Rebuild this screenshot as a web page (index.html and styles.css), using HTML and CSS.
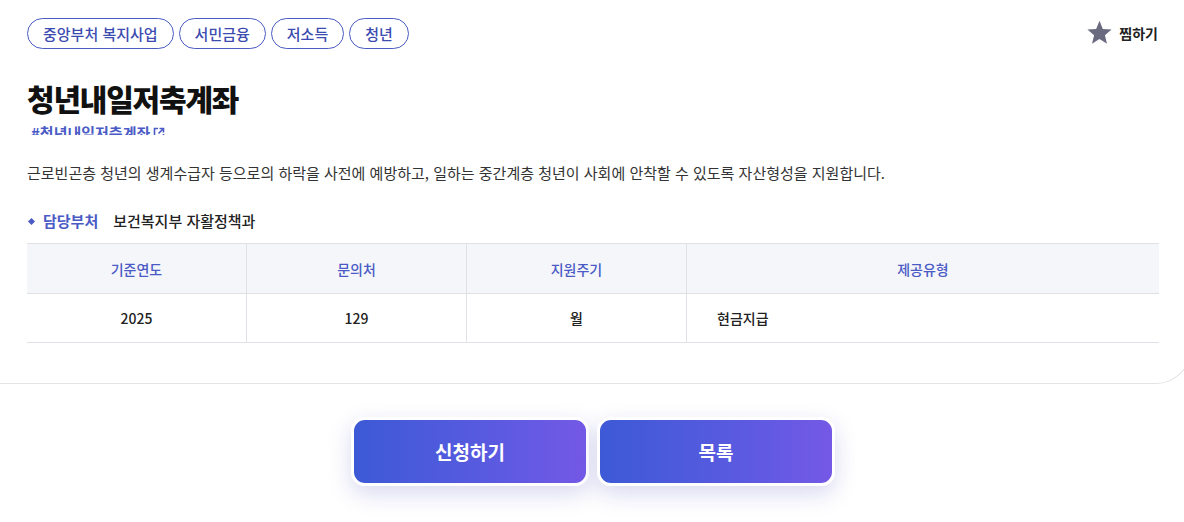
FILE: index.html
```html
<!DOCTYPE html>
<html lang="ko">
<head>
<meta charset="utf-8">
<link rel="stylesheet" href="styles.css">
</head>
<body>
<div class="page">
  <section class="card">
    <div class="top-row">
      <div class="tags">
        <span class="tag">중앙부처 복지사업</span>
        <span class="tag">서민금융</span>
        <span class="tag">저소득</span>
        <span class="tag">청년</span>
      </div>
      <button class="fav">
        <svg class="star" viewBox="0 0 24 24" width="25" height="25"><path d="M12 .8l3.2 7.8 8.4.6-6.4 5.4 2 8.2L12 18.3l-7.2 4.5 2-8.2L.4 9.2l8.4-.6z" fill="#6b6b80"/></svg>
        <span>찜하기</span>
      </button>
    </div>
    <h1 class="title">청년내일저축계좌</h1>
    <div class="hash-wrap"><a class="hash">#청년내일저축계좌 <svg viewBox="0 0 12 12" width="12" height="12"><path d="M5 1.5H1.5v9h9V7" fill="none" stroke="#4a5bc6" stroke-width="1.6"/><path d="M6.5 1.5h4v4M10.5 1.5L5.5 6.5" fill="none" stroke="#4a5bc6" stroke-width="1.6"/></svg></a></div>
    <p class="desc">근로빈곤층 청년의 생계수급자 등으로의 하락을 사전에 예방하고, 일하는 중간계층 청년이 사회에 안착할 수 있도록 자산형성을 지원합니다.</p>
    <div class="dept"><span class="dot"></span><span class="dept-label">담당부처</span><span class="dept-value">보건복지부 자활정책과</span></div>
    <table class="info">
      <thead>
        <tr><th class="c1">기준연도</th><th class="c2">문의처</th><th class="c3">지원주기</th><th class="c4">제공유형</th></tr>
      </thead>
      <tbody>
        <tr><td>2025</td><td>129</td><td>월</td><td class="left">현금지급</td></tr>
      </tbody>
    </table>
  </section>
  <div class="actions">
    <button class="btn">신청하기</button>
    <button class="btn">목록</button>
  </div>
</div>
</body>
</html>
```

FILE: styles.css
```css
html, body {
  margin: 0;
  padding: 0;
  background: #ffffff;
  overflow: hidden;
}
body {
  font-family: "Noto Sans CJK KR", "Noto Sans", "Liberation Sans", sans-serif;
  color: #222;
}
.page {
  width: 1184px;
  padding-bottom: 40px;
}
.card {
  margin-left: -20px;
  margin-right: -7px;
  padding: 18px 31px 40px 47px;
  border-bottom: 1px solid #e3e3e8;
  border-right: 1px solid #e3e3e8;
  border-bottom-right-radius: 35px;
}
.top-row {
  display: flex;
  justify-content: space-between;
  align-items: flex-start;
}
.tags {
  display: flex;
  gap: 5px;
}
.tag {
  display: inline-flex;
  align-items: center;
  height: 29px;
  padding: 0 15px;
  border: 1px solid #4a5bc2;
  border-radius: 16px;
  font-size: 15px;
  font-weight: 500;
  color: #3b4bb0;
  line-height: 1;
}
.fav {
  display: flex;
  align-items: center;
  gap: 7px;
  background: none;
  border: 0;
  padding: 0;
  margin-top: 2px;
  margin-right: 1px;
  font-family: inherit;
  font-size: 14px;
  font-weight: 700;
  color: #222;
}
.title {
  margin: 28px 0 0;
  font-size: 30px;
  font-weight: 800;
  line-height: 42px;
  color: #111;
  letter-spacing: -1.2px;
}
.hash-wrap {
  height: 15px;
  overflow: hidden;
  margin-top: 1px;
  padding-left: 4px;
}
.hash {
  display: inline-flex;
  align-items: center;
  gap: 3px;
  font-size: 15px;
  font-weight: 700;
  line-height: 20px;
  color: #4a5bc6;
}
.desc {
  margin: 27px 0 0;
  font-size: 15px;
  line-height: 22px;
  color: #333;
}
.dept {
  display: flex;
  align-items: center;
  margin-top: 27px;
  font-size: 15px;
  line-height: 20px;
}
.dot {
  width: 5px;
  height: 5px;
  background: #4a5bc6;
  transform: rotate(45deg);
  margin: 0 9px 0 2px;
}
.dept-label {
  font-weight: 700;
  color: #4a5bc6;
  margin-right: 15px;
}
.dept-value {
  font-weight: 500;
  color: #222;
}
.info {
  width: 100%;
  margin-top: 12px;
  border-collapse: collapse;
  font-size: 14px;
}
.info th, .info td {
  height: 49px;
  padding: 0;
  text-align: center;
  border-top: 1px solid #e0e0e6;
  border-bottom: 1px solid #e0e0e6;
  border-left: 1px solid #e0e0e6;
}
.info td {
  height: 48px;
}
.info th:first-child, .info td:first-child {
  border-left: 0;
}
.info th {
  background: #f5f6fa;
  color: #4a5bc6;
  font-weight: 500;
  font-size: 14px;
}
.info td {
  font-weight: 500;
  color: #222;
}
.info td.left {
  text-align: left;
  padding-left: 30px;
}
.c1 { width: 219px; }
.c2, .c3 { width: 219px; }
.actions {
  display: flex;
  justify-content: center;
  gap: 8px;
  margin-top: 33px;
  padding-left: 2px;
}
.btn {
  width: 238px;
  height: 69px;
  border: 3px solid #ffffff;
  border-radius: 14px;
  background: linear-gradient(90deg, #3d5ad6 0%, #5a5ae0 60%, #7459e6 100%);
  color: #fff;
  font-family: inherit;
  font-size: 19px;
  font-weight: 700;
  box-shadow: 0 8px 22px rgba(80, 80, 190, 0.22);
}
```
